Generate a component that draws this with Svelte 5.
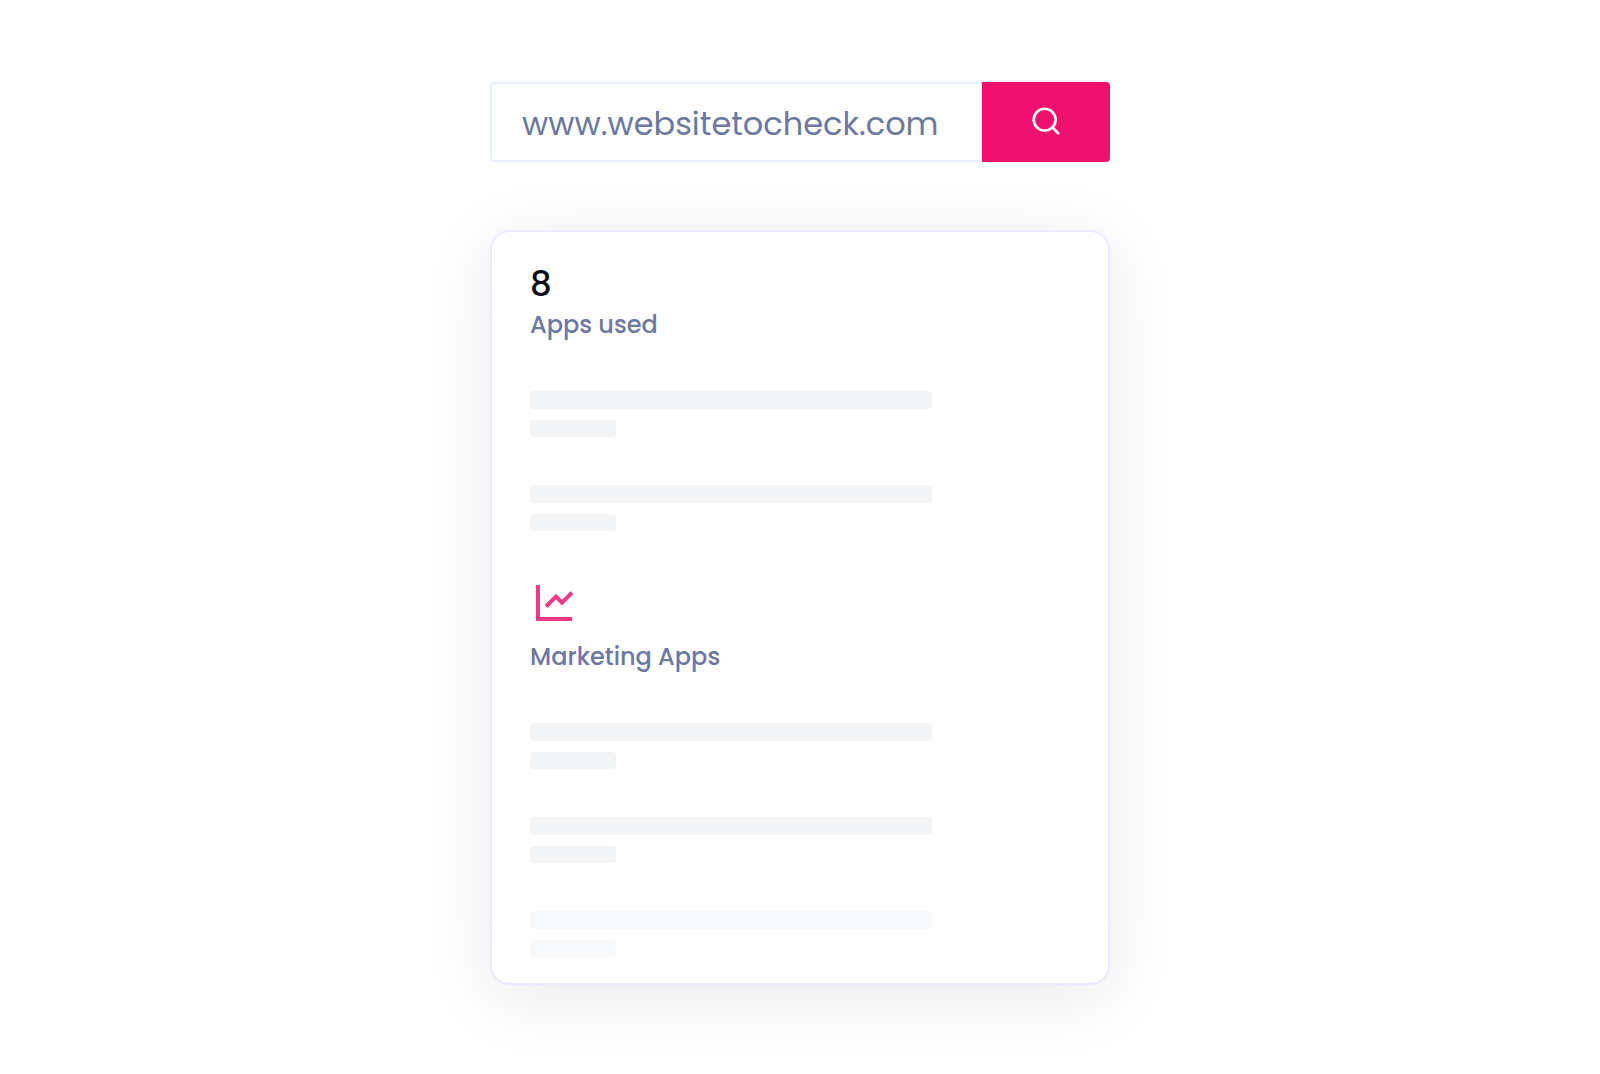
<!-- App.svelte: website checker with a search bar and a result card -->

<script>
  let url = $state("www.websitetocheck.com");

  // Result groups, each with the placeholder rows below its heading
  const appsUsed = { count: 8, label: "Apps used", rows: [{}, {}] };
  const marketing = { label: "Marketing Apps", rows: [{}, {}, { faded: true }] };
</script>

{#snippet placeholders(rows)}
  <ul class="rows">
    {#each rows as row}
      <li class="row" class:faded={row.faded}>
        <span class="bar"></span>
        <span class="bar short"></span>
      </li>
    {/each}
  </ul>
{/snippet}

<main class="page">
  <form class="search" onsubmit={(e) => e.preventDefault()}>
    <input type="text" aria-label="Website to check" bind:value={url} />
    <button type="submit" aria-label="Search">
      <svg viewBox="0 0 24 24" width="32" height="32" aria-hidden="true">
        <circle cx="11" cy="11" r="8.2" />
        <path d="M16.8 16.8 21.7 21.7" />
      </svg>
    </button>
  </form>

  <section class="card">
    <div class="group">
      <strong class="count">{appsUsed.count}</strong>
      <h2>{appsUsed.label}</h2>
      {@render placeholders(appsUsed.rows)}
    </div>

    <div class="group">
      <svg class="chart" viewBox="0 0 48 48" width="48" height="48" aria-hidden="true">
        <path d="M8 6v34h34" />
        <path d="M16 27.5l10-10 6 6.2 10-10" />
      </svg>
      <h2>{marketing.label}</h2>
      {@render placeholders(marketing.rows)}
    </div>
  </section>
</main>

<style>
  :global(body) {
    margin: 0;
    background: white;
  }

  .page {
    box-sizing: border-box;
    max-width: 660px;
    margin: 0 auto;
    padding: 82px 20px 88px;
    font-family: Poppins, Inter, "Open Sans", sans-serif;
    color: #6d789f;
  }

  /* Search bar */
  .search {
    display: flex;
    height: 80px;
    margin-bottom: 68px;
  }

  .search input {
    flex: 1;
    min-width: 0;
    box-sizing: border-box;
    padding: 4px 20px 0 30px;
    border: 2px solid #e8eefc;
    border-right: none;
    border-radius: 4px 0 0 4px;
    background: white;
    color: inherit;
    font-family: inherit;
    font-size: 32px;
    outline: none;
  }

  .search button {
    display: flex;
    align-items: center;
    justify-content: center;
    width: 128px;
    padding: 0 0 2px;
    border: none;
    border-radius: 0 4px 4px 0;
    background: #f0106e;
    cursor: pointer;
  }

  .search svg {
    fill: none;
    stroke: white;
    stroke-width: 2;
  }

  /* Result card */
  .card {
    padding: 31px 38px 26px;
    border: 2px solid #eaebfd;
    border-radius: 20px;
    background: white;
    box-shadow: 0 12px 72px rgba(0, 0, 0, 0.09);
  }

  .group + .group {
    margin-top: 48px;
  }

  .count {
    display: block;
    color: #0b0d17;
    font-size: 34px;
    font-weight: 500;
    line-height: 43px;
  }

  h2 {
    margin: 0;
    font-size: 24px;
    font-weight: 500;
    line-height: 37px;
  }

  .chart {
    display: block;
    margin-bottom: 11px;
    fill: none;
    stroke: #ee3a86;
    stroke-width: 4;
  }

  /* Placeholder rows */
  .rows {
    display: flex;
    flex-direction: column;
    gap: 48px;
    margin: 48px 0 0;
    padding: 0;
    list-style: none;
  }

  .row {
    display: flex;
    flex-direction: column;
    gap: 11px;
  }

  .bar {
    width: 74.5%;
    height: 18px;
    border-radius: 4px;
    background: #f3f4f6;
  }

  .short {
    width: 16%;
    height: 17px;
  }

  .faded .bar {
    background: #f8f9fb;
  }
</style>
